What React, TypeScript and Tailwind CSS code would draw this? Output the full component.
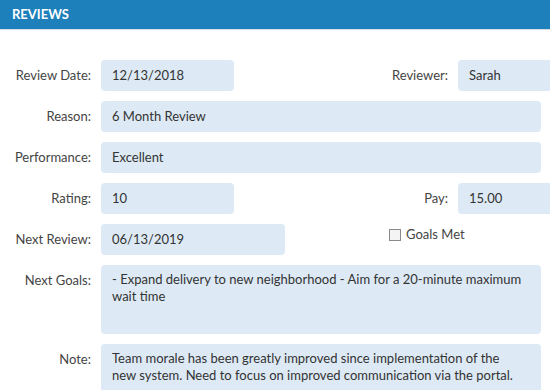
import React from "react";

const font = { fontFamily: "Lato, 'Open Sans', sans-serif" };

function Label({ children, w = "w-[91px]" }: { children: React.ReactNode; w?: string }) {
  return (
    <div className={`${w} shrink-0 text-right text-[13px] leading-[31px] text-[#444]`}>{children}</div>
  );
}

function Field({ value, w }: { value: string; w: string }) {
  return (
    <div
      className={`${w} ml-[10px] h-[31px] shrink-0 rounded-[4px] bg-[#ddeaf5] pl-[11px] text-[13px] leading-[31px] text-[#333]`}
    >
      {value}
    </div>
  );
}

export default function App() {
  return (
    <div className="h-[390px] w-[550px] overflow-hidden bg-white" style={font}>
      <div className="h-[30px] border-b border-[#d4dde4] bg-[#1e80ba] pl-[12px] text-[13px] font-bold leading-[29px] text-white">
        REVIEWS
      </div>
      <div className="flex flex-col gap-[10px] pt-[30px]">
        <div className="flex">
          <Label>Review Date:</Label>
          <Field value="12/13/2018" w="w-[133px]" />
          <Label w="w-[214px]">Reviewer:</Label>
          <Field value="Sarah" w="w-[133px]" />
        </div>
        <div className="flex">
          <Label>Reason:</Label>
          <Field value="6 Month Review" w="w-[440px]" />
        </div>
        <div className="flex">
          <Label>Performance:</Label>
          <Field value="Excellent" w="w-[440px]" />
        </div>
        <div className="flex">
          <Label>Rating:</Label>
          <Field value="10" w="w-[133px]" />
          <Label w="w-[214px]">Pay:</Label>
          <Field value="15.00" w="w-[133px]" />
        </div>
        <div className="flex">
          <Label>Next Review:</Label>
          <Field value="06/13/2019" w="w-[184px]" />
          <div className="ml-[104px] flex h-[21px] items-center">
            <div className="h-[12px] w-[12px] border border-[#8a8a8a] bg-[#f4f4f4]" />
            <span className="ml-[5px] text-[13px] text-[#444]">Goals Met</span>
          </div>
        </div>
        <div className="flex">
          <div className="w-[91px] shrink-0 pt-[6px] text-right text-[13px] leading-[18px] text-[#444]">Next Goals:</div>
          <div className="ml-[10px] h-[69px] w-[440px] shrink-0 rounded-[4px] bg-[#ddeaf5] px-[11px] pt-[6px] text-[13px] leading-[17px] text-[#333]">
            - Expand delivery to new neighborhood - Aim for a 20-minute maximum wait time
          </div>
        </div>
        <div className="flex">
          <div className="w-[91px] shrink-0 pt-[6px] text-right text-[13px] leading-[18px] text-[#444]">Note:</div>
          <div className="ml-[10px] h-[69px] w-[440px] shrink-0 rounded-[4px] bg-[#ddeaf5] pl-[11px] pr-[26px] pt-[6px] text-[13px] leading-[17px] text-[#333]">
            Team morale has been greatly improved since implementation of the new system. Need to focus on improved communication via the portal.
          </div>
        </div>
      </div>
    </div>
  );
}
